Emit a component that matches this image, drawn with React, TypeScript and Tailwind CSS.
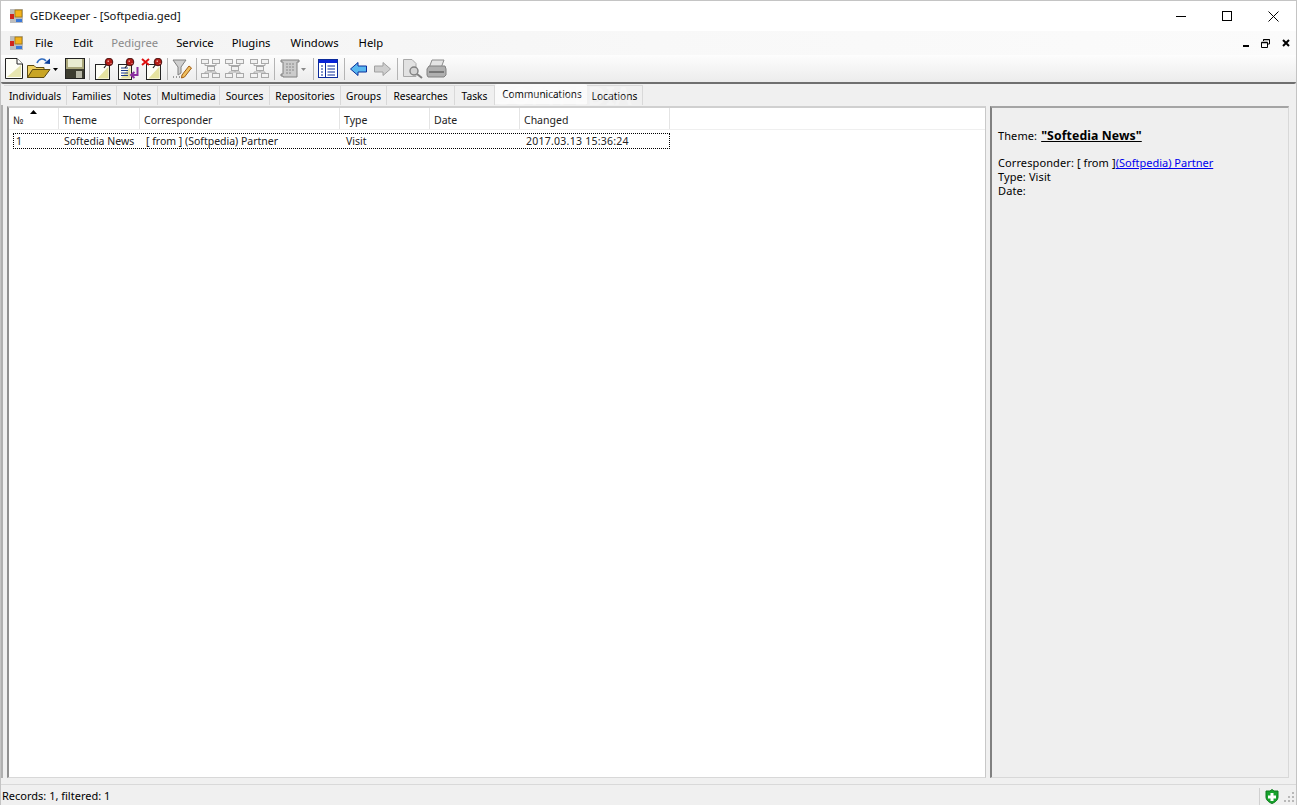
import type { ReactNode } from 'react';

const tabs = [
  { name: 'Individuals', width: 'w-[63px]' },
  { name: 'Families', width: 'w-[50px]' },
  { name: 'Notes', width: 'w-[41px]' },
  { name: 'Multimedia', width: 'w-[62px]' },
  { name: 'Sources', width: 'w-[50px]' },
  { name: 'Repositories', width: 'w-[71px]' },
  { name: 'Groups', width: 'w-[46px]' },
  { name: 'Researches', width: 'w-[68px]' },
  { name: 'Tasks', width: 'w-[40px]' },
];

const columns = [
  { name: '№', width: 'w-[50px]' },
  { name: 'Theme', width: 'w-[81px]' },
  { name: 'Corresponder', width: 'w-[200px]' },
  { name: 'Type', width: 'w-[90px]' },
  { name: 'Date', width: 'w-[90px]' },
  { name: 'Changed', width: 'w-[150px]' },
];

const cells = [
  { text: '1', width: 'w-[48px] pl-[2px]' },
  { text: 'Softedia News', width: 'w-[82px] pl-[2px]' },
  { text: '[ from ] (Softpedia) Partner', width: 'w-[200px] pl-[2px]' },
  { text: 'Visit', width: 'w-[90px] pl-[2px]' },
  { text: '', width: 'w-[90px]' },
  { text: '2017.03.13 15:36:24', width: 'w-[144px] pl-[2px] tracking-[0.25px]' },
];

function Icon({ w = 22, h = 22, children }: { w?: number; h?: number; children: ReactNode }) {
  return (
    <svg width={w} height={h} viewBox={`0 0 ${w} ${h}`} className="shrink-0">
      {children}
    </svg>
  );
}

function AppIcon() {
  return (
    <Icon w={14} h={14}>
      <rect x="1" y="0" width="13" height="14" fill="#bdbdbd" />
      <rect x="6" y="1" width="7" height="7" fill="#f3b31c" stroke="#9a7212" strokeWidth="0.8" />
      <rect x="1" y="5" width="4" height="5" fill="#d0241c" />
      <rect x="7" y="10" width="6" height="3" fill="#3a78d8" />
    </Icon>
  );
}

function Pin({ x, y }: { x: number; y: number }) {
  return (
    <g transform={`translate(${x} ${y})`}>
      <path d="M3 6L0 10" stroke="#222" strokeWidth="1.200" />
      <circle cx="5" cy="4" r="3.800" fill="#b51d17" stroke="#3a0a08" strokeWidth="0.900" />
      <path d="M3.500 2.500h1.500v1.500H3.500zM6.500 5h1v1h-1z" fill="#f2a8a0" />
    </g>
  );
}

function Sheet({ x = 1, y = 5, w = 14, h = 15 }: { x?: number; y?: number; w?: number; h?: number }) {
  return (
    <g>
      <rect x={x} y={y} width={w} height={h} fill="#fdfdf6" stroke="#222" />
      <path d={`M${x + 2} ${y + h - 1} L${x + w - 1} ${y + 2} L${x + w - 1} ${y + h - 1} Z`} fill="#e6e3a0" />
    </g>
  );
}

function TreeIcon() {
  return (
    <Icon w={21} h={21}>
      <g fill="#f2f2f2" stroke="#a9a9a9">
        <rect x="1.500" y="1.500" width="7" height="4" />
        <rect x="12.500" y="1.500" width="7" height="4" />
        <rect x="7.500" y="8.500" width="7" height="4" />
        <rect x="1.500" y="15.500" width="7" height="4" />
        <rect x="12.500" y="15.500" width="7" height="4" />
      </g>
      <path d="M5 6v1.500h11V6M11 7.500V8.500M11 13v1H5v1.500M11 14h5v1.500" fill="none" stroke="#a9a9a9" />
    </Icon>
  );
}

function Sep() {
  return <div className="mx-[2px] h-[22px] w-[1px] shrink-0 bg-[#b4b4b4]" />;
}

function ToolArrow({ color = '#000' }: { color?: string }) {
  return (
    <svg width="5" height="3" viewBox="0 0 5 3" className="shrink-0">
      <path d="M0 0h5L2.500 3z" fill={color} />
    </svg>
  );
}

function Toolbar() {
  return (
    <div className="flex h-[27px] items-center bg-gradient-to-b from-[#fdfdfd] to-[#ececec] pl-[4px]">
      <Icon w={18} h={21}>
        <path d="M.5 .5H12L17.500 6V20.500H.5Z" fill="#fdfdf6" stroke="#222" />
        <path d="M12 .5V6H17.500" fill="#fff" stroke="#222" />
        <path d="M2 19 L16 7 V19Z" fill="#e8e6b0" />
      </Icon>
      <div className="ml-[4px]">
        <Icon w={24} h={21}>
          <path d="M10 5 C12 0 17 0 19 3" fill="none" stroke="#2f6bc0" strokeWidth="1.600" />
          <path d="M17 5.500L23 .5V6Z" fill="#0b3f9c" />
          <path d="M.5 19.500V7.500H7L9 9.500H17V12H6L.5 19.500Z" fill="#f0d060" stroke="#5c4a10" />
          <path d="M.5 19.500L5.500 11.500H23L17 19.500Z" fill="#c9a524" stroke="#5c4a10" />
        </Icon>
      </div>
      <div className="ml-[2px] mt-[2px]">
        <ToolArrow />
      </div>
      <div className="ml-[7px]">
        <Icon w={20} h={21}>
          <rect x=".5" y=".5" width="19" height="20" fill="#a9a67a" stroke="#222" />
          <rect x="3" y="1" width="14" height="8" fill="#e9ebd0" />
          <rect x="1" y="11" width="18" height="9" fill="#3c3c30" />
          <rect x="11" y="13" width="6" height="7" fill="#b8b8a8" />
        </Icon>
      </div>
      <div className="ml-[2px]"><Sep /></div>
      <div className="ml-[2px]">
        <Icon w={21} h={22}>
          <Sheet x={1.500} y={6.500} w={14} h={15} />
          <Pin x={10} y={0} />
        </Icon>
      </div>
      <div className="ml-[2px]">
        <Icon w={22} h={22}>
          <Sheet x={1.500} y={6.500} w={13} h={15} />
          <path d="M4 10h7M4 12.500h7M4 15h7M4 17.500h7" stroke="#1c3a8a" />
          <Pin x={8} y={0} />
          <path d="M20.500 9 V17 H15 M17.500 14 L14 17 L17.500 20" fill="none" stroke="#8a2fa0" strokeWidth="2" />
        </Icon>
      </div>
      <div className="ml-[2px]">
        <Icon w={22} h={22}>
          <Sheet x={5.500} y={6.500} w={14} h={15} />
          <path d="M1 1L8 7M8 1L1 7" stroke="#e01010" strokeWidth="2" />
          <Pin x={12} y={0} />
        </Icon>
      </div>
      <div className="ml-[2px]"><Sep /></div>
      <div className="ml-[2px]">
        <Icon w={20} h={21}>
          <path d="M1 2H14L9 9V15L6 17V9Z" fill="#cfcfcf" stroke="#808080" />
          <path d="M10 17L17 8L19.500 10L12.500 19L9.500 20Z" fill="#f0c060" stroke="#a05a10" />
          <path d="M1 19h1M4 19h1M7 19h1" stroke="#444" />
        </Icon>
      </div>
      <div className="ml-[2px]"><Sep /></div>
      <div className="ml-[1px]"><TreeIcon /></div>
      <div className="ml-[3px]"><TreeIcon /></div>
      <div className="ml-[4px]"><TreeIcon /></div>
      <div className="ml-[2px]"><Sep /></div>
      <div className="ml-[3px]">
        <Icon w={20} h={21}>
          <path d="M1 2H19V4H17V19H3V18H1V16H3V4H1Z" fill="#cbcbcb" stroke="#808080" />
          <path d="M6 6h8M6 9h8M6 12h8M6 15h6" stroke="#8a8a8a" strokeDasharray="2 1" />
        </Icon>
      </div>
      <div className="ml-[1px] mt-[2px]">
        <ToolArrow color="#888" />
      </div>
      <div className="ml-[5px]"><Sep /></div>
      <div className="ml-[2px]">
        <Icon w={20} h={19}>
          <rect x=".5" y=".5" width="19" height="18" fill="#fff" stroke="#0b2a9a" />
          <rect x="1" y="1" width="18" height="3" fill="#0a24d8" />
          <path d="M7.500 4V18" stroke="#0b2a9a" />
          <path d="M3 7h2M3 10h2M3 13h2M3 16h2M9.500 7h7.500M9.500 10h7.500M9.500 13h7.500M9.500 16h7.500" stroke="#0b2a9a" />
        </Icon>
      </div>
      <div className="ml-[4px]"><Sep /></div>
      <div className="ml-[3px]">
        <Icon w={17} h={14}>
          <path d="M.5 7L8 .5V4H16.500V10H8V13.500Z" fill="#58b8f0" stroke="#0b2f9a" />
        </Icon>
      </div>
      <div className="ml-[7px]">
        <Icon w={17} h={14}>
          <path d="M16.500 7L9 .5V4H.5V10H9V13.500Z" fill="#cfcfcf" stroke="#a0a0a0" />
        </Icon>
      </div>
      <div className="ml-[4px]"><Sep /></div>
      <div className="ml-[2px]">
        <Icon w={21} h={21}>
          <path d="M1.500 1.500H10L14 5.500V18.500H1.500Z" fill="#e2e2e2" stroke="#a8a8a8" />
          <circle cx="12" cy="13" r="4" fill="#d4d4d4" stroke="#808080" strokeWidth="1.400" />
          <path d="M15 16L20 20" stroke="#808080" strokeWidth="2" />
        </Icon>
      </div>
      <div className="ml-[3px]">
        <Icon w={21} h={20}>
          <path d="M6 1H18L15 9H3Z" fill="#e4e4e4" stroke="#8c8c8c" />
          <path d="M1 10L3 7H19L20 10V16L18 18H2L1 16Z" fill="#b0b0b0" stroke="#808080" />
          <path d="M3 13H18" stroke="#787878" strokeWidth="2" />
        </Icon>
      </div>
    </div>
  );
}

export default function App() {
  return (
    <div className="relative flex h-[805px] w-[1297px] flex-col overflow-hidden border-x border-t border-[#c4c4c4] bg-[#f0f0f0] font-['Noto_Sans',sans-serif] text-[10.5px] text-black">
      {/* Title bar */}
      <div className="flex h-[30px] shrink-0 items-center bg-white pl-[8px]">
        <AppIcon />
        <span className="ml-[7px] text-[11.25px] text-[#111]">GEDKeeper - [Softpedia.ged]</span>
        <div className="ml-auto flex items-center">
          <div className="flex h-[30px] w-[46px] items-center justify-center">
            <div className="h-[1px] w-[10px] bg-black" />
          </div>
          <div className="flex h-[30px] w-[46px] items-center justify-center">
            <div className="h-[10px] w-[10px] border border-black" />
          </div>
          <div className="flex h-[30px] w-[46px] items-center justify-center">
            <svg width="11" height="11" viewBox="0 0 11 11">
              <path d="M.5 .5L10.500 10.500M10.500 .5L.5 10.500" stroke="#000" />
            </svg>
          </div>
        </div>
      </div>

      {/* Menu */}
      <div className="flex h-[24px] shrink-0 items-center bg-gradient-to-r from-[#f3f3f3] via-[#f8f8f8] to-[#fbfbfb] pl-[8px] text-[11.25px]">
        <AppIcon />
        <span className="ml-[12px]">File</span>
        <span className="ml-[20px]">Edit</span>
        <span className="ml-[18px] text-[#8a8a8a]">Pedigree</span>
        <span className="ml-[18px]">Service</span>
        <span className="ml-[18px]">Plugins</span>
        <span className="ml-[20px]">Windows</span>
        <span className="ml-[20px]">Help</span>
        <div className="ml-auto flex items-center gap-[12px] pr-[6px]">
          <div className="mt-[6px] h-[2px] w-[6px] bg-black" />
          <svg width="9" height="9" viewBox="0 0 9 9">
            <path d="M2.500 2V.5H8.500V5H6.500M.5 3.500H6.500V8.500H.5Z" fill="none" stroke="#000" />
            <path d="M.5 3.500H6.500M2.500 .5H8.500" stroke="#000" strokeWidth="1.500" />
          </svg>
          <svg width="8" height="8" viewBox="0 0 8 8">
            <path d="M1 1L7 7M7 1L1 7" stroke="#000" strokeWidth="2" />
          </svg>
        </div>
      </div>

      <Toolbar />
      <div className="h-[2px] shrink-0 rounded-b-sm border-b-2 border-[#6f6f6f]" />

      {/* Tabs */}
      <div className="flex h-[21px] shrink-0 items-end pl-[3px] text-[10.2px]">
        {tabs.map((tab) => (
          <div
            key={tab.name}
            className={`${tab.width} flex h-[20px] items-center justify-center border-r border-t border-[#d9d9d9] bg-[#f0f0f0] pt-[3px]`}
          >
            {tab.name}
          </div>
        ))}
        <div className="mb-[1px] flex h-[20px] w-[92px] items-start justify-center rounded-t-[2px] bg-[#fafafa] pl-[2px] pt-[3px] text-[10px]">
          Communications
        </div>
        <div className="flex h-[20px] w-[56px] items-center justify-center border-r border-t border-[#d9d9d9] bg-[#f0f0f0] pt-[3px]">
          Locations
        </div>
      </div>

      {/* Main area */}
      <div className="flex min-h-0 flex-1 border-l-2 border-[#b0b0b0] pl-[4px] pr-[7px] pt-[1px]">
        <div className="w-[979px] shrink-0 border-b border-l-2 border-r border-t-2 border-b-[#d8d8d8] border-l-[#909090] border-r-[#c8c8c8] border-t-[#d0d0d0] bg-white">
          <div className="flex h-[22px] border-b border-[#efefef]">
            {columns.map((col, i) => (
              <div
                key={col.name}
                className={`${col.width} relative flex items-center border-r border-[#e4e4e4] pl-[4px] pt-[4px] text-[#222]`}
              >
                {col.name}
                {i === 0 && (
                  <svg width="7" height="4" viewBox="0 0 7 4" className="absolute left-[21px] top-[2px]">
                    <path d="M0 4L3.500 0L7 4Z" fill="#000" />
                  </svg>
                )}
              </div>
            ))}
          </div>
          <div className="ml-[4px] mt-[3px] flex h-[16px] w-[657px] items-center border border-dotted border-black pt-[2px] text-[#222]">
            {cells.map((cell, i) => (
              <div key={i} className={`${cell.width} whitespace-nowrap`}>
                {cell.text}
              </div>
            ))}
          </div>
        </div>
        <div className="w-[4px] shrink-0" />
        <div className="flex-1 border-b border-l-2 border-r border-t-2 border-b-[#d8d8d8] border-l-[#808080] border-r-[#d8d8d8] border-t-[#a4a4a4] bg-[#efefef] pl-[6px] pt-[19px] text-[11px] tracking-[0.1px]">
          <div className="flex items-baseline gap-[4px]">
            <span>Theme:</span>
            <span className="text-[12.25px] font-bold underline">"Softedia News"</span>
          </div>
          <div className="mt-[11px] leading-[14px]">
            <div>
              Corresponder: [ from ]<span className="tracking-normal text-[#0000ee] underline">(Softpedia) Partner</span>
            </div>
            <div>Type: Visit</div>
            <div>Date:</div>
          </div>
        </div>
      </div>

      {/* Status bar */}
      <div className="mt-[6px] flex h-[21px] shrink-0 items-center border-t border-[#d9d9d9] pl-[1px] pt-[2px] text-[11px]">
        <span>Records: 1, filtered: 1</span>
        <div className="ml-auto flex items-center pr-[1px]">
          <div className="mr-[5px] h-[17px] w-[1px] bg-[#d0d0d0]" />
          <svg width="14" height="15" viewBox="0 0 14 15">
            <path d="M7 .5L9 2L13 2V8C13 11 10 13.500 7 14.500C4 13.500 1 11 1 8V2L5 2Z" fill="#17a32c" stroke="#0d7a1c" />
            <path d="M5.500 4H8.500V6.500H11V9.500H8.500V12H5.500V9.500H3V6.500H5.500Z" fill="#fff" />
          </svg>
          <svg width="11" height="11" viewBox="0 0 11 11" className="ml-[5px]">
            <path d="M8 1h2v2H8zM4 5h2v2H4zM8 5h2v2H8zM0 9h2v2H0zM4 9h2v2H4zM8 9h2v2H8z" fill="#b8b8b8" />
          </svg>
        </div>
      </div>

      {/* Watermark over the tab strip */}
      <div className="pointer-events-none absolute left-[496px] top-[84px] text-[25px] font-semibold leading-[20px] text-white opacity-30">
        SOFTPEDIA
      </div>
    </div>
  );
}
